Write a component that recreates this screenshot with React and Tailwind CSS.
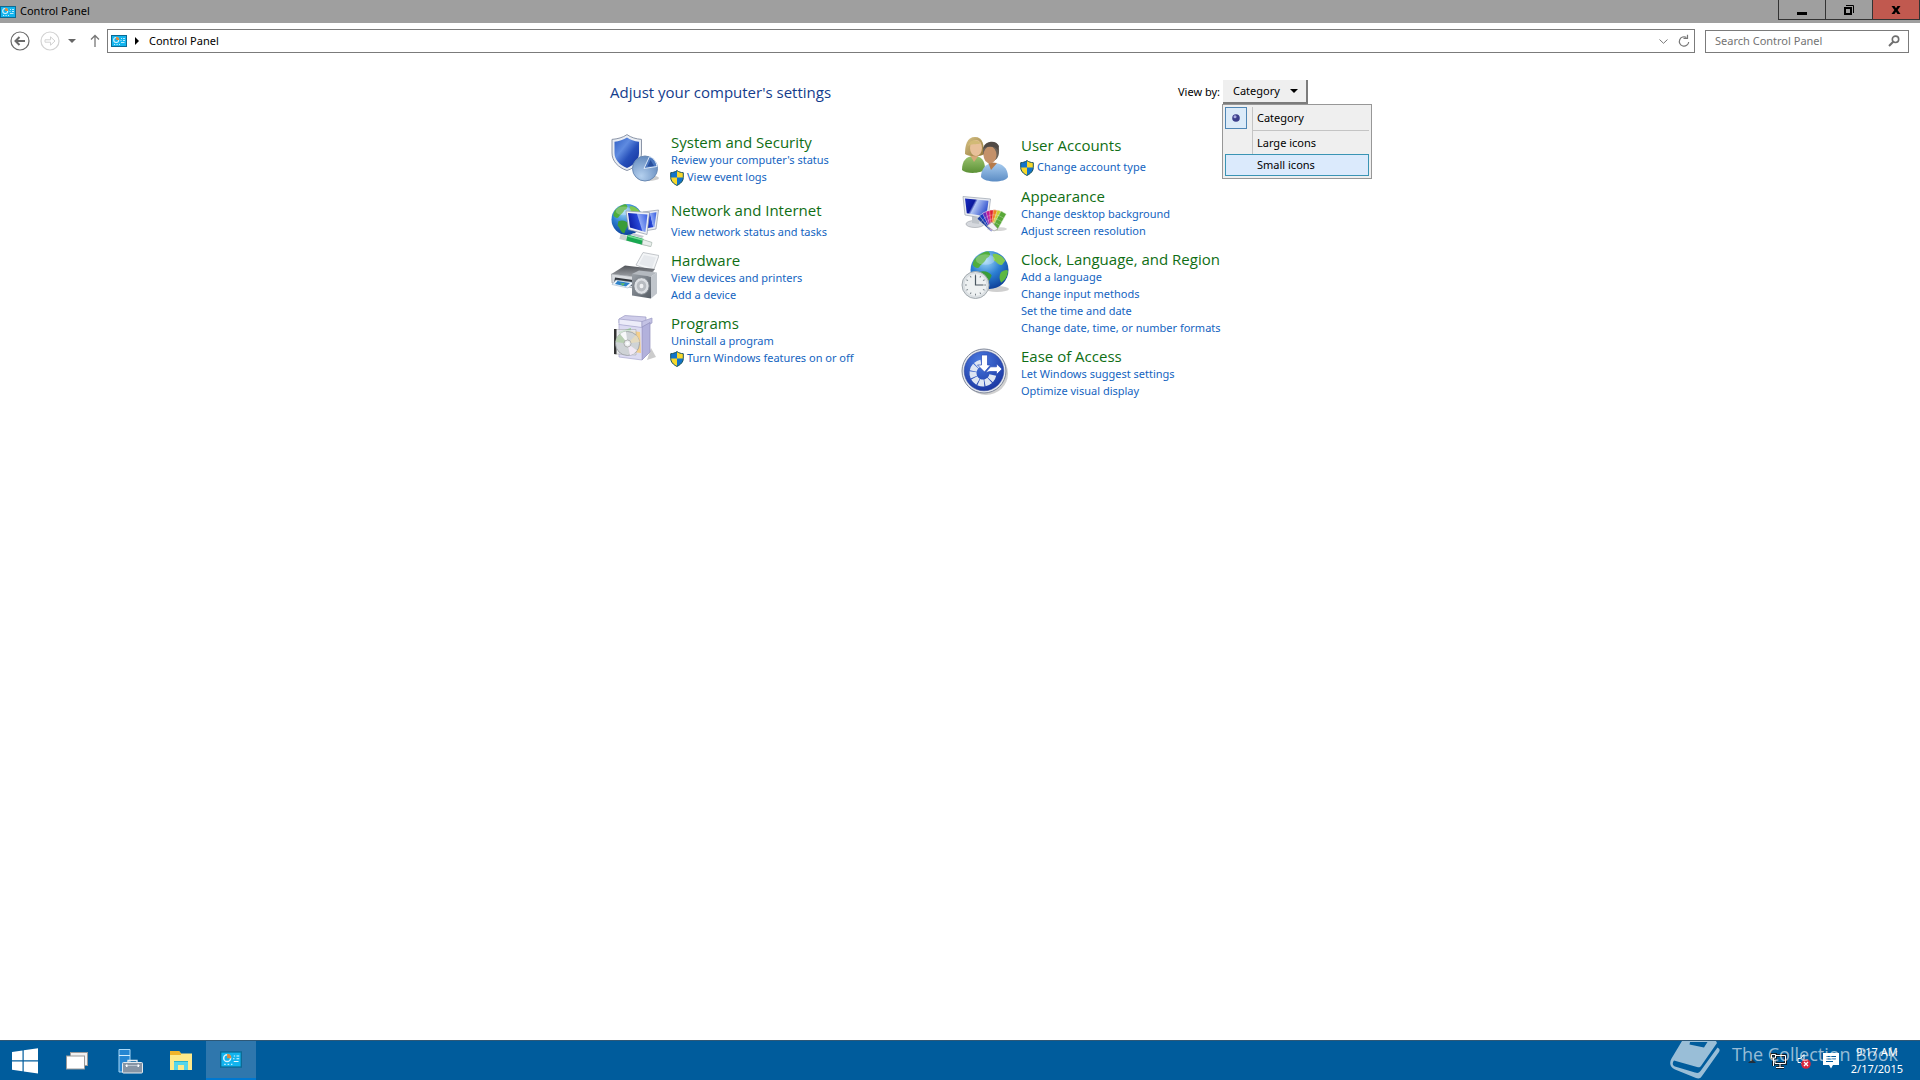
import React from "react";

function PanelIcon({ className }) {
  return (
    <svg viewBox="0 0 16 12" className={className} aria-hidden="true">
      <rect x="0.5" y="0.5" width="15" height="11" fill="#12b4ee" stroke="#0d6a94" />
      <circle cx="5.2" cy="5" r="2.5" fill="none" stroke="#d8f4ff" strokeWidth="1.1" />
      <path d="M5.2 5V1.8A3.2 3.2 0 0 1 8.2 5Z" fill="#e08a3c" />
      <path d="M10 3.5h1M12 3.5h2M9.500 5.500h1M12 5.500h2M10 7.500h3.500" stroke="#e4f8ff" strokeWidth="0.8" />
      <path d="M3 9.500h1.200M5.500 9.500h1.200M8 9.500h1" stroke="#bdeeff" />
    </svg>
  );
}

function Uac() {
  return (
    <svg viewBox="0 0 14 16" className="h-4 w-3.5 shrink-0" aria-hidden="true">
      <path d="M7 .6C5.200 1.900 3 2.600.7 2.700V7.500C.7 11 3.400 13.800 7 15.400Z" fill="#1173c9" />
      <path d="M7 .6C8.800 1.900 11 2.600 13.300 2.700V7.500C13.300 11 10.600 13.800 7 15.400Z" fill="#f7d82a" />
      <path d="M.7 7.500H7V15.400C3.400 13.800.7 11 .7 7.500Z" fill="#f7d82a" />
      <path d="M7 7.500H13.300C13.300 11 10.600 13.800 7 15.400Z" fill="#1173c9" />
      <path d="M7 .6C5.200 1.900 3 2.600.7 2.700V7.500C.7 11 3.400 13.800 7 15.400C10.600 13.800 13.300 11 13.300 7.500V2.700C11 2.600 8.800 1.900 7 .6Z" fill="none" stroke="#1b5360" strokeWidth="1" />
    </svg>
  );
}

function Icon({ children }) {
  return (
    <svg viewBox="0 0 48 48" className="mt-0.5 size-12 shrink-0" aria-hidden="true">
      {children}
    </svg>
  );
}

function SecurityIcon() {
  return (
    <Icon>
      <defs>
        <linearGradient id="sh" x1="0" y1="0" x2="1" y2="1">
          <stop offset="0" stopColor="#2f5ec4" />
          <stop offset="0.35" stopColor="#5f8be0" />
          <stop offset="0.6" stopColor="#2750ba" />
          <stop offset="1" stopColor="#12309a" />
        </linearGradient>
        <radialGradient id="pie" cx="0.35" cy="0.8" r="0.9">
          <stop offset="0" stopColor="#b4d0ee" />
          <stop offset="1" stopColor="#5a82b8" />
        </radialGradient>
      </defs>
      <ellipse cx="37" cy="44" rx="11" ry="3" fill="#9a9a9a" opacity="0.5" />
      <path d="M16 .6C12 3.500 6.500 5 1 5.400V19C1 27 7 33.500 16 36.500C25 33.500 30.500 27 30.500 19V5.400C25 5 20 3.500 16 .6Z" fill="#e9edf3" stroke="#8b95a8" />
      <path d="M16 3.500C12.500 5.700 8 7.200 3.500 7.700V19C3.500 25.500 8.500 31 16 34C23.500 31 28 25.500 28 19V7.700C23.500 7.200 19 5.700 16 3.500Z" fill="url(#sh)" />
      <circle cx="34" cy="34.500" r="12.500" fill="url(#pie)" stroke="#6a8ab4" />
      <path d="M33 34.500L38.500 22.500A12.500 12.500 0 0 1 46 32.500Z" fill="#4a76be" stroke="#dbe8f7" strokeWidth="1" />
      <path d="M36.500 32.500L39.500 26L43 32Z" fill="#294f9c" />
    </Icon>
  );
}

function Globe({ cx, cy, r, id }) {
  return (
    <g transform={`translate(${cx} ${cy}) scale(${r / 18})`}>
      <defs>
        <radialGradient id={id} cx="0.4" cy="0.25" r="0.8">
          <stop offset="0" stopColor="#9fd8f8" />
          <stop offset="0.5" stopColor="#2c7fd2" />
          <stop offset="1" stopColor="#0a3a94" />
        </radialGradient>
      </defs>
      <circle r="18" fill={`url(#${id})`} />
      <path d="M-15-9C-10-16-3-18-1-17.500C2-15 0-12-3-11C-4-8-7-6-9-4C-10-1-13-1-16-5Z" fill="#4fae3c" />
      <path d="M3-15C8-17 13-12 15-9L12-5C8-4 7-8 4-9Z" fill="#7fc850" />
      <path d="M-10 2C-5 0 0 2 2 5C1 9-2 11-3 16C-7 16-8 10-11 7Z" fill="#3a9c38" />
      <path d="M11 2C14 0 17-1 17.500 1C17 7 14 10 11 12C9 9 9 5 11 2Z" fill="#5cb843" />
      <ellipse cx="-4" cy="-10" rx="9" ry="5" fill="#ffffff" opacity="0.25" />
    </g>
  );
}

function NetworkIcon() {
  return (
    <Icon>
      <defs>
        <linearGradient id="scr" x1="0" y1="0.600" x2="1" y2="0.300">
          <stop offset="0" stopColor="#0a1aa0" />
          <stop offset="0.55" stopColor="#2848d8" />
          <stop offset="0.600" stopColor="#8ea8f4" />
          <stop offset="1" stopColor="#4468e4" />
        </linearGradient>
      </defs>
      <Globe cx={16} cy={17.5} r={15.5} id="g1" />
      <path d="M32 10L47.500 8L45 27L33 29Z" fill="#e8ebf2" stroke="#8e97a8" strokeWidth="0.700" />
      <path d="M33 12L45.500 10.300L43.400 25L34 26.500Z" fill="url(#scr)" />
      <path d="M15 9L38.500 10.500L36 32.500L17.500 27.500Z" fill="#eef1f6" stroke="#8e97a8" strokeWidth="0.700" />
      <path d="M17 11L36.500 12.500L34.400 30L19 25.600Z" fill="url(#scr)" />
      <path d="M22 31L33 34L31 36L20 33Z" fill="#c5cad2" />
      <path d="M9 34.500L40 42.500" stroke="#c9d2cf" strokeWidth="5" />
      <path d="M16 35.500L32 39.800" stroke="#18a850" strokeWidth="6" />
      <path d="M17 34L32 38" stroke="#78dc96" strokeWidth="1.500" />
      <path d="M32 37.500L41 40.500L40 44.500L31 42.500Z" fill="#e9eeec" stroke="#9fb0a6" strokeWidth="0.600" />
    </Icon>
  );
}

function HardwareIcon() {
  return (
    <Icon>
      <defs>
        <linearGradient id="pr" x1="0" y1="0" x2="0" y2="1">
          <stop offset="0" stopColor="#53565b" />
          <stop offset="1" stopColor="#a5a8ad" />
        </linearGradient>
        <linearGradient id="spk" x1="0" y1="0" x2="1" y2="1">
          <stop offset="0" stopColor="#9aa0a7" />
          <stop offset="1" stopColor="#555c64" />
        </linearGradient>
      </defs>
      <path d="M25 13L32 .5L48 3.500L42 20Z" fill="#f3f5f7" stroke="#b6babf" strokeWidth="0.800" />
      <path d="M28 12L33 3L45 5.500L41 16Z" fill="#e6e9ed" />
      <path d="M.5 22L14 13.500L44 17L36 26Z" fill="url(#pr)" />
      <path d="M.5 22L36 26V34L22 36L1 31Z" fill="#d9dce0" stroke="#888d94" strokeWidth="0.600" />
      <path d="M4 25.500L22 28V34L3 31Z" fill="#34383d" />
      <path d="M5 28L23 30.500L17 36L1 32.500Z" fill="#f1f6fb" stroke="#8fa8c0" strokeWidth="0.500" />
      <path d="M6.500 29L19 31L15 34.500L4 32Z" fill="#2c80c8" />
      <path d="M9 31.500L14 31L12 34Z" fill="#5fb86a" />
      <path d="M21 22L40 24.500V46.500L21 43.500Z" fill="url(#spk)" />
      <path d="M40 24.500L46 20.500V41.500L40 46.500Z" fill="#c0c5cb" />
      <path d="M21 22L28 18.500L46 20.500L40 24.500Z" fill="#b4b9bf" />
      <ellipse cx="30.500" cy="34" rx="7.700" ry="8.400" fill="#dcdfe3" stroke="#7b8188" />
      <ellipse cx="30.500" cy="34" rx="4.800" ry="5.400" fill="#b8bcc1" />
      <ellipse cx="30.500" cy="34" rx="2" ry="2.300" fill="#f0f1f3" />
    </Icon>
  );
}

function ProgramsIcon() {
  return (
    <Icon>
      <path d="M36 45L45 42L40 33Z" fill="#9a9a9a" opacity="0.5" />
      <path d="M8 8V4L14 .5L35 2V8Z" fill="#cfcdea" stroke="#9c9bc4" strokeWidth="0.700" />
      <path d="M8 4L31 6.500V13L8 10Z" fill="#ececf9" stroke="#9c9bc4" strokeWidth="0.700" />
      <path d="M31 6.500L41 3V8L31 13Z" fill="#c3c2e4" stroke="#9c9bc4" strokeWidth="0.700" />
      <path d="M31 12L39 7.500V37L31 45Z" fill="#b2b1dc" stroke="#8f8eba" strokeWidth="0.700" />
      <path d="M8 9.500L31 12.500V45L8 42Z" fill="#dcdbf2" stroke="#a9a8d0" strokeWidth="0.700" />
      <path d="M14 15L29 17L30 38L14 36Z" fill="#f3cf8e" />
      <path d="M7 17L20 13L18 26Z" fill="#8fd48e" />
      <path d="M3.500 14.500H25V40L3.500 39Z" fill="#e5e7e9" opacity="0.750" stroke="#888" strokeWidth="0.500" />
      <path d="M3 14V39L5.500 39.300V14Z" fill="#333" />
      <circle cx="16.500" cy="28.500" r="12" fill="#cfd3d6" stroke="#8f9499" strokeWidth="0.700" />
      <path d="M16.500 28.500L9 19A12 12 0 0 1 15 16.600Z" fill="#f7f8f9" />
      <path d="M16.500 28.500L26 35.500A12 12 0 0 1 19 40.200Z" fill="#f1e9f5" />
      <path d="M16.500 28.500L4.700 27A12 12 0 0 1 9 19Z" fill="#b9cfb2" />
      <path d="M16.500 28.500L28.500 27A12 12 0 0 0 25 20Z" fill="#e4dabf" />
      <circle cx="16.500" cy="28.500" r="3.500" fill="#eceef0" stroke="#999" strokeWidth="0.700" />
      <circle cx="16.500" cy="28.500" r="1.300" fill="#fff" />
    </Icon>
  );
}

function UsersIcon() {
  return (
    <Icon>
      <defs>
        <linearGradient id="ug" x1="0" y1="0" x2="0" y2="1">
          <stop offset="0" stopColor="#9cc470" />
          <stop offset="1" stopColor="#5c9136" />
        </linearGradient>
        <linearGradient id="ub" x1="0" y1="0" x2="0" y2="1">
          <stop offset="0" stopColor="#a9cdf0" />
          <stop offset="1" stopColor="#5b8cc4" />
        </linearGradient>
        <linearGradient id="hair" x1="0" y1="0" x2="1" y2="1">
          <stop offset="0" stopColor="#d8c488" />
          <stop offset="1" stopColor="#927638" />
        </linearGradient>
      </defs>
      <path d="M1 33C1 24 5 19 13 19C20 19 24 23 24 32C20 37 5 37 1 33Z" fill="url(#ug)" />
      <path d="M9 18L13 25L18 18Z" fill="#d8a878" />
      <path d="M4 17C4 8 6 0 14 0C22 0 23 8 23 17C20 20 8 20 4 17Z" fill="url(#hair)" />
      <ellipse cx="15" cy="11" rx="6" ry="8" fill="#e8c09a" />
      <path d="M7 9C8 3 14 1 20 6C17 8 12 6 7 9Z" fill="#d2ba76" />
      <path d="M20 40C20 32 25 26 33 26C41 26 47 31 47 40C44 46 24 46 20 40Z" fill="url(#ub)" />
      <path d="M27 25L30 33L36 26Z" fill="#b67a4a" />
      <path d="M22 14C22 7 26 5 30.500 5C36 5 38.500 9 38 15C38 20 35 24 31 24C26 24 22 20 22 14Z" fill="#6b6259" />
      <ellipse cx="29" cy="18" rx="6.500" ry="8.500" fill="#c4916a" />
      <path d="M22 12C25 9 33 8 37 13L38 9C35 3 25 3 22 12Z" fill="#514a46" />
    </Icon>
  );
}

function AppearanceIcon() {
  const fan = ["#1e3e9c", "#1638c0", "#6a28b8", "#c01898", "#e02030", "#f08020", "#c8d030", "#58a838"];
  return (
    <Icon>
      <defs>
        <linearGradient id="mon" x1="0" y1="0" x2="1" y2="0.400">
          <stop offset="0" stopColor="#1a2cc0" />
          <stop offset="0.400" stopColor="#0a189c" />
          <stop offset="0.500" stopColor="#b0c4f4" />
          <stop offset="1" stopColor="#3858d0" />
        </linearGradient>
      </defs>
      <ellipse cx="14" cy="36" rx="9" ry="3.500" fill="#d5d8dd" stroke="#a4a8ae" strokeWidth="0.700" />
      <path d="M11 28L18 30V36L11 35Z" fill="#bfc4ca" />
      <path d="M2 8.500L29.500 11L27 31L4 27Z" fill="#e8ebf1" stroke="#9aa2ae" strokeWidth="0.700" />
      <path d="M4 10.500L27.500 12.700L25.400 28.500L5.800 25.200Z" fill="url(#mon)" />
      <ellipse cx="36" cy="41" rx="10" ry="2" fill="#999" opacity="0.4" />
      {fan.map((c, i) => (
        <g key={c} transform={`rotate(${-48 + i * 11} 33 42)`}>
          <rect x="30" y="22" width="6" height="19" fill={c} stroke="#f4f4f4" strokeWidth="0.400" />
          <path d="M30 27h6M30 31h6M30 35h6" stroke="#fff" strokeWidth="0.400" opacity="0.6" />
        </g>
      ))}
      <path d="M26 38L31 34L37 41L33 43Z" fill="#f0f1f4" stroke="#888" strokeWidth="0.500" />
    </Icon>
  );
}

function ClockIcon() {
  return (
    <Icon>
      <ellipse cx="36" cy="38" rx="12" ry="3" fill="#888" opacity="0.4" />
      <Globe cx={28.5} cy={19} r={19} id="g2" />
      <circle cx="14.500" cy="34" r="13.500" fill="#dce1e4" stroke="#a2a9ae" />
      <circle cx="14.500" cy="34" r="11.500" fill="#eef1f2" stroke="#cdd2d6" strokeWidth="0.600" />
      {[0, 30, 60, 90, 120, 150, 180, 210, 240, 270, 300, 330].map((a) => (
        <path key={a} d="M14.500 23.500v1.800" transform={`rotate(${a} 14.500 34)`} stroke="#7c858c" />
      ))}
      <path d="M14.500 24.500V34H22.500" fill="none" stroke="#4a5660" strokeWidth="1.200" />
    </Icon>
  );
}

function ringSegment(start, end) {
  const point = (r, deg) => {
    const a = (deg * Math.PI) / 180;
    return `${22 + r * Math.cos(a)} ${25 + r * Math.sin(a)}`;
  };
  return `M${point(13.5, start)}A13.5 13.5 0 0 1 ${point(13.5, end)}L${point(6.5, end)}A6.5 6.5 0 0 0 ${point(6.5, start)}Z`;
}

function EaseIcon() {
  return (
    <Icon>
      <defs>
        <radialGradient id="ea" cx="0.4" cy="0.25" r="0.85">
          <stop offset="0" stopColor="#4a7ae0" />
          <stop offset="1" stopColor="#15309c" />
        </radialGradient>
      </defs>
      <ellipse cx="25" cy="25.500" rx="22" ry="21.500" fill="#777" opacity="0.35" />
      <circle cx="23" cy="23" r="22" fill="#e4e8ef" stroke="#7f8799" />
      <circle cx="23" cy="23" r="19.800" fill="url(#ea)" stroke="#2a3f90" strokeWidth="0.500" />
      {[12, 48, 84, 120, 156, 192, 228].map((a) => (
        <path key={a} d={ringSegment(a, a + 31)} fill="#dfe6f2" />
      ))}
      <path d="M20.500 7H26.500V17H29.500L23.500 24L16.500 17H20.500Z" fill="#fff" stroke="#2448b8" strokeWidth="0.700" />
      <path d="M24.500 24.500L29.500 18.800H35.500V15.800L41 21L35.500 26.500V23.500H29Z" fill="#fff" stroke="#2448b8" strokeWidth="0.700" />
    </Icon>
  );
}

const leftItems = [
  { title: "System and Security", Art: SecurityIcon, gap: "pb-3.5", links: ["Review your computer's status", "*View event logs"] },
  { title: "Network and Internet", Art: NetworkIcon, gap: "pb-0", links: ["View network status and tasks"] },
  { title: "Hardware", Art: HardwareIcon, gap: "pb-[9px]", links: ["View devices and printers", "Add a device"] },
  { title: "Programs", Art: ProgramsIcon, gap: "pb-[9px]", links: ["Uninstall a program", "*Turn Windows features on or off"] },
];

const rightItems = [
  { title: "User Accounts", Art: UsersIcon, gap: "pb-px", links: ["*Change account type"] },
  { title: "Appearance", Art: AppearanceIcon, gap: "pb-[9px]", links: ["Change desktop background", "Adjust screen resolution"] },
  {
    title: "Clock, Language, and Region",
    Art: ClockIcon,
    gap: "pb-[9px]",
    links: ["Add a language", "Change input methods", "Set the time and date", "Change date, time, or number formats"],
  },
  { title: "Ease of Access", Art: EaseIcon, gap: "pb-[9px]", links: ["Let Windows suggest settings", "Optimize visual display"] },
];

function Category({ title, Art, gap, links }) {
  return (
    <section className={`flex gap-3 ${gap}`}>
      <Art />
      <div>
        <h2 className="font-['Open_Sans',sans-serif] text-[15px] leading-5 text-[#0f6e14]">
          <a href="#">{title}</a>
        </h2>
        <ul className={links.length === 1 ? "mt-1" : ""}>
          {links.map((l) => {
            const shield = l.startsWith("*");
            return (
              <li key={l} className={shield ? "-ml-px h-[17px]" : "h-[17px]"}>
                <a href="#" className="flex h-[17px] items-center gap-[3px] text-[#1464bf]">
                  {shield && <Uac />}
                  <span>{shield ? l.slice(1) : l}</span>
                </a>
              </li>
            );
          })}
        </ul>
      </div>
    </section>
  );
}

function TitleBar() {
  return (
    <header className="flex h-[23px] shrink-0 items-start justify-between bg-[#9f9f9f]">
      <div className="flex h-[23px] items-center gap-1">
        <PanelIcon className="h-3 w-4" />
        <h1>Control Panel</h1>
      </div>
      <div className="flex h-5 divide-x divide-[#333] border-x border-b border-[#333]">
        <button aria-label="Minimize" className="flex w-[47px] items-center justify-center">
          <svg viewBox="0 0 12 12" className="size-3" aria-hidden="true"><path d="M1 8h10v3H1z" /></svg>
        </button>
        <button aria-label="Restore" className="flex w-[47px] items-center justify-center">
          <svg viewBox="0 0 12 12" className="size-3" aria-hidden="true">
            <path d="M2 4h6v6H2z" fill="none" stroke="#000" strokeWidth="2" />
            <path d="M3 1.500h7.500V9" fill="none" stroke="#000" />
          </svg>
        </button>
        <button aria-label="Close" className="flex w-[46px] items-center justify-center bg-[#c1594f]">
          <svg viewBox="0 0 12 12" className="size-3" aria-hidden="true">
            <path d="M1.500 2H4.500L6 4.300L7.500 2H10.500L7.600 6L10.500 10H7.500L6 7.700L4.500 10H1.500L4.400 6Z" />
          </svg>
        </button>
      </div>
    </header>
  );
}

function NavBar() {
  return (
    <nav className="flex h-9 shrink-0 items-center pr-[11px] pl-2.5">
      <button aria-label="Back">
        <svg viewBox="0 0 20 20" className="size-5" fill="none" stroke="#6a6a6a" aria-hidden="true">
          <circle cx="10" cy="10" r="9" strokeWidth="1.200" />
          <path d="M15 10H6M9.500 6L5.500 10L9.500 14" strokeWidth="2" />
        </svg>
      </button>
      <button aria-label="Forward" className="ml-2.5" disabled>
        <svg viewBox="0 0 20 20" className="size-5" fill="none" stroke="#d2d2d2" aria-hidden="true">
          <circle cx="10" cy="10" r="9" strokeWidth="1.200" />
          <path d="M5 8.800H10.500V5.800L15 10L10.500 14.200V11.200H5Z" />
        </svg>
      </button>
      <button aria-label="Recent locations" className="ml-2">
        <svg viewBox="0 0 8 4" className="h-1 w-2" aria-hidden="true"><path d="M0 0H8L4 4Z" fill="#666" /></svg>
      </button>
      <button aria-label="Up" className="ml-3.5">
        <svg viewBox="0 0 10 14" className="h-3.5 w-2.5" fill="none" stroke="#777" strokeWidth="1.300" aria-hidden="true">
          <path d="M5 13V1.500M1 5.500L5 1.500L9 5.500" />
        </svg>
      </button>
      <div className="ml-[7px] flex h-6 grow items-center border border-[#7b7b7b] pl-[3px]">
        <PanelIcon className="h-3 w-4" />
        <svg viewBox="0 0 4 8" className="ml-2 h-2 w-1" aria-hidden="true"><path d="M0 0L4 4L0 8Z" /></svg>
        <a href="#" className="ml-2.5 grow">Control Panel</a>
        <button aria-label="Previous locations">
          <svg viewBox="0 0 9 5" className="h-[5px] w-[9px]" fill="none" stroke="#777" aria-hidden="true"><path d="M.5 .5L4.500 4.300L8.500 .5" /></svg>
        </button>
        <button aria-label="Refresh" className="mr-1 ml-2.5">
          <svg viewBox="0 0 12 14" className="h-3.5 w-3" fill="none" stroke="#777" strokeWidth="1.200" aria-hidden="true">
            <path d="M8.500 3.500A4.700 4.700 0 1 0 10.700 8" />
            <path d="M5.500 4.500H9.500V.8" />
          </svg>
        </button>
      </div>
      <label className="ml-2.5 flex h-[23px] w-[204px] items-center border border-[#7b7b7b] pr-2 pl-[9px]">
        <input type="text" aria-label="Search Control Panel" placeholder="Search Control Panel" className="min-w-0 grow outline-none placeholder:text-[#737373]" />
        <svg viewBox="0 0 12 12" className="size-3" fill="none" stroke="#6f6f6f" aria-hidden="true">
          <circle cx="7.500" cy="4.300" r="3.200" strokeWidth="1.600" />
          <path d="M5.200 6.800L1 11" strokeWidth="2" />
        </svg>
      </label>
    </nav>
  );
}

function ViewBy() {
  return (
    <div className="relative flex items-center">
      <span id="view-by" className="mr-[3px]">View by:</span>
      <button aria-labelledby="view-by" aria-haspopup="menu" aria-expanded="true" className="flex h-6 w-[85px] items-center justify-between border-r-2 border-b-2 border-[#7c7c7c] bg-[#efefef] pr-2 pl-2.5">
        Category
        <svg viewBox="0 0 8 4" className="h-1 w-2" aria-hidden="true"><path d="M0 0H8L4 4Z" /></svg>
      </button>
      <ul role="menu" className="absolute top-full right-[-64px] w-[150px] border border-[#979797] bg-[#efefef] p-0.5">
        <li role="menuitemradio" aria-checked="true" className="flex h-[22px] items-center">
          <span className="flex size-[22px] items-center justify-center border border-[#4f86b5] bg-[#dcebf9]">
            <svg viewBox="0 0 8 8" className="size-2" aria-hidden="true">
              <circle cx="4" cy="4" r="3.800" fill="#3c3f8c" />
              <circle cx="3" cy="2.800" r="1.500" fill="#a9abe0" />
            </svg>
          </span>
          <span className="ml-[5px] flex h-full grow items-center border-l border-[#c4c4c4] pl-1">Category</span>
        </li>
        <li role="separator" className="ml-[27px] h-1 border-l border-[#c4c4c4] pt-px">
          <span className="block border-t border-[#c4c4c4]" />
        </li>
        <li role="menuitemradio" aria-checked="false" className="ml-[27px] flex h-[21px] items-center border-l border-[#c4c4c4] pl-1">Large icons</li>
        <li role="menuitemradio" aria-checked="false" className="flex h-[22px] items-center border border-[#3a94b4] bg-[#dbeafc] pl-[31px]">Small icons</li>
      </ul>
    </div>
  );
}

function TaskButton({ label, active, width = "w-[50px]", children }) {
  return (
    <button
      aria-label={label}
      className={`flex h-full items-center justify-center ${width} ${active ? "border-b-2 border-[#0078d0] bg-[#2f77ad]" : ""}`}
    >
      {children}
    </button>
  );
}

function Taskbar() {
  return (
    <footer className="relative flex h-10 shrink-0 items-center justify-between border-t border-[#2f5876] bg-[#005c9c] text-white">
      <div className="flex h-full items-center">
        <TaskButton label="Start">
          <svg viewBox="0 0 26 26" className="size-[26px]" fill="#fff" aria-hidden="true">
            <path d="M0 4L10.500 2.500V12.300H0ZM11.700 2.300L26 .3V12.300H11.700ZM0 13.500H10.500V23.300L0 21.800ZM11.700 13.500H26V25.500L11.700 23.500Z" />
          </svg>
        </TaskButton>
        <TaskButton label="Task View" width="w-[54px]">
          <svg viewBox="0 0 22 18" className="h-[18px] w-[22px]" stroke="#9a9a9a" aria-hidden="true">
            <rect x="4.500" y=".5" width="17" height="13" fill="#f0f0f0" />
            <rect x=".5" y="4" width="18" height="13" fill="#fff" />
          </svg>
        </TaskButton>
        <TaskButton label="Server Manager" width="w-[52px]">
          <svg viewBox="0 0 25 26" className="h-[26px] w-[25px]" aria-hidden="true">
            <path d="M1 1.500H12V24H1Z" fill="#2686d2" stroke="#a9d8f8" />
            <path d="M1 7.500H12" stroke="#d5edfc" />
            <path d="M10 14.500V12.500H19V14.500" fill="none" stroke="#e4eaef" strokeWidth="1.300" />
            <rect x="4.500" y="14.500" width="20" height="10.500" rx="1" fill="#8795a5" stroke="#e4eaef" />
            <path d="M7 17.500H22" stroke="#c9d2da" strokeWidth="0.800" />
            <path d="M8 16.500h1.500v2.500H8zM19.500 16.500h1.500v2.500h-1.500z" fill="#fff" />
          </svg>
        </TaskButton>
        <TaskButton label="File Explorer">
          <svg viewBox="0 0 22 20" className="h-5 w-[22px]" aria-hidden="true">
            <path d="M0 0H9L11 2.500H22V19H0Z" fill="#fde98a" />
            <path d="M0 0H9L11 2.500V4H0Z" fill="#f0b42a" />
            <path d="M4 19V10.500H18V19H14V14H8V19Z" fill="#55d6ea" />
            <path d="M4 10.500H18" stroke="#2bb4d0" />
          </svg>
        </TaskButton>
        <TaskButton label="Control Panel" active>
          <PanelIcon className="h-[17px] w-[22px]" />
        </TaskButton>
      </div>
      <div className="flex h-full items-center pr-[17px]">
        <button aria-label="Show hidden icons" className="mr-3.5">
          <svg viewBox="0 0 8 4" className="h-1 w-2" aria-hidden="true"><path d="M0 4H8L4 0Z" fill="#222f3c" /></svg>
        </button>
        <button aria-label="Network" className="mr-2.5">
          <svg viewBox="0 0 17 16" className="h-4 w-[17px]" fill="none" aria-hidden="true">
            <path d="M6 2.500H15.500V10.500H5V7M10 10.500V14M6 14.500H14" stroke="#12202c" strokeWidth="3" />
            <path d="M1.500 1.500H5.500V5H1.500ZM3.500 5V13" stroke="#12202c" strokeWidth="3" />
            <path d="M6 2.500H15.500V10.500H5V7M10 10.500V14M6 14.500H14" stroke="#fff" />
            <path d="M1.500 1.500H5.500V5H1.500ZM3.500 5V13" stroke="#fff" />
          </svg>
        </button>
        <button aria-label="Volume muted" className="mr-3">
          <svg viewBox="0 0 14 16" className="h-4 w-3.5" aria-hidden="true">
            <path d="M1 5.500H3.500L7 1.500V13L3.500 9.500H1Z" fill="none" stroke="#fff" />
            <circle cx="9" cy="11" r="4.800" fill="#d9263c" />
            <path d="M7 9L11 13M11 9L7 13" stroke="#fff" strokeWidth="1.300" />
          </svg>
        </button>
        <button aria-label="Notifications" className="mr-3">
          <svg viewBox="0 0 16 16" className="size-4" aria-hidden="true">
            <path d="M0 0H16V12H10L8 15.500L6 12H0Z" fill="#fff" />
            <path d="M3 3.500H13M3 6H13M3 8.500H10" stroke="#005c9c" />
          </svg>
        </button>
        <div className="flex flex-col items-center pb-0.5 leading-[17px]">
          <time>9:17 AM</time>
          <time>2/17/2015</time>
        </div>
      </div>
      <div className="pointer-events-none absolute top-0 right-[22px] flex items-start gap-3 text-white/60">
        <svg viewBox="0 0 50 38" className="h-[38px] w-[50px]" fill="currentColor" aria-hidden="true">
          <path fillRule="evenodd" d="M12 0H46L47 2L31 25C30 26.500 29 26.500 27 26L4 19.500C2 22 2.500 24.500 5 25.500L25 31.500C27.500 32.500 29 32 30.500 30L47.500 6.500C50 8 50 9 49 11L32 35C30.500 37.500 28.500 38 26 37L5 28.500C0 26 -1 22 1.500 17.500ZM20 1L19.500 3.500L34 6.500L37.500 1Z" />
        </svg>
        <p className="font-['Open_Sans',sans-serif] text-lg leading-[26px]">The Collection Book</p>
      </div>
    </footer>
  );
}

export default function App() {
  return (
    <div className="flex min-h-screen flex-col bg-white font-['Noto_Sans',sans-serif] text-[11px] text-black">
      <TitleBar />
      <NavBar />
      <main className="mx-auto w-full max-w-[700px] grow pt-[21px]">
        <div className="flex h-6 items-center justify-between pr-0.5">
          <h2 className="font-['Open_Sans',sans-serif] text-[15px] leading-5 text-[#143c8c]">Adjust your computer's settings</h2>
          <ViewBy />
        </div>
        <div className="mt-7 grid grid-cols-2">
          <div className="pl-px">{leftItems.map((c) => <Category key={c.title} {...c} />)}</div>
          <div className="pt-[3px] pl-px">{rightItems.map((c) => <Category key={c.title} {...c} />)}</div>
        </div>
      </main>
      <Taskbar />
    </div>
  );
}
